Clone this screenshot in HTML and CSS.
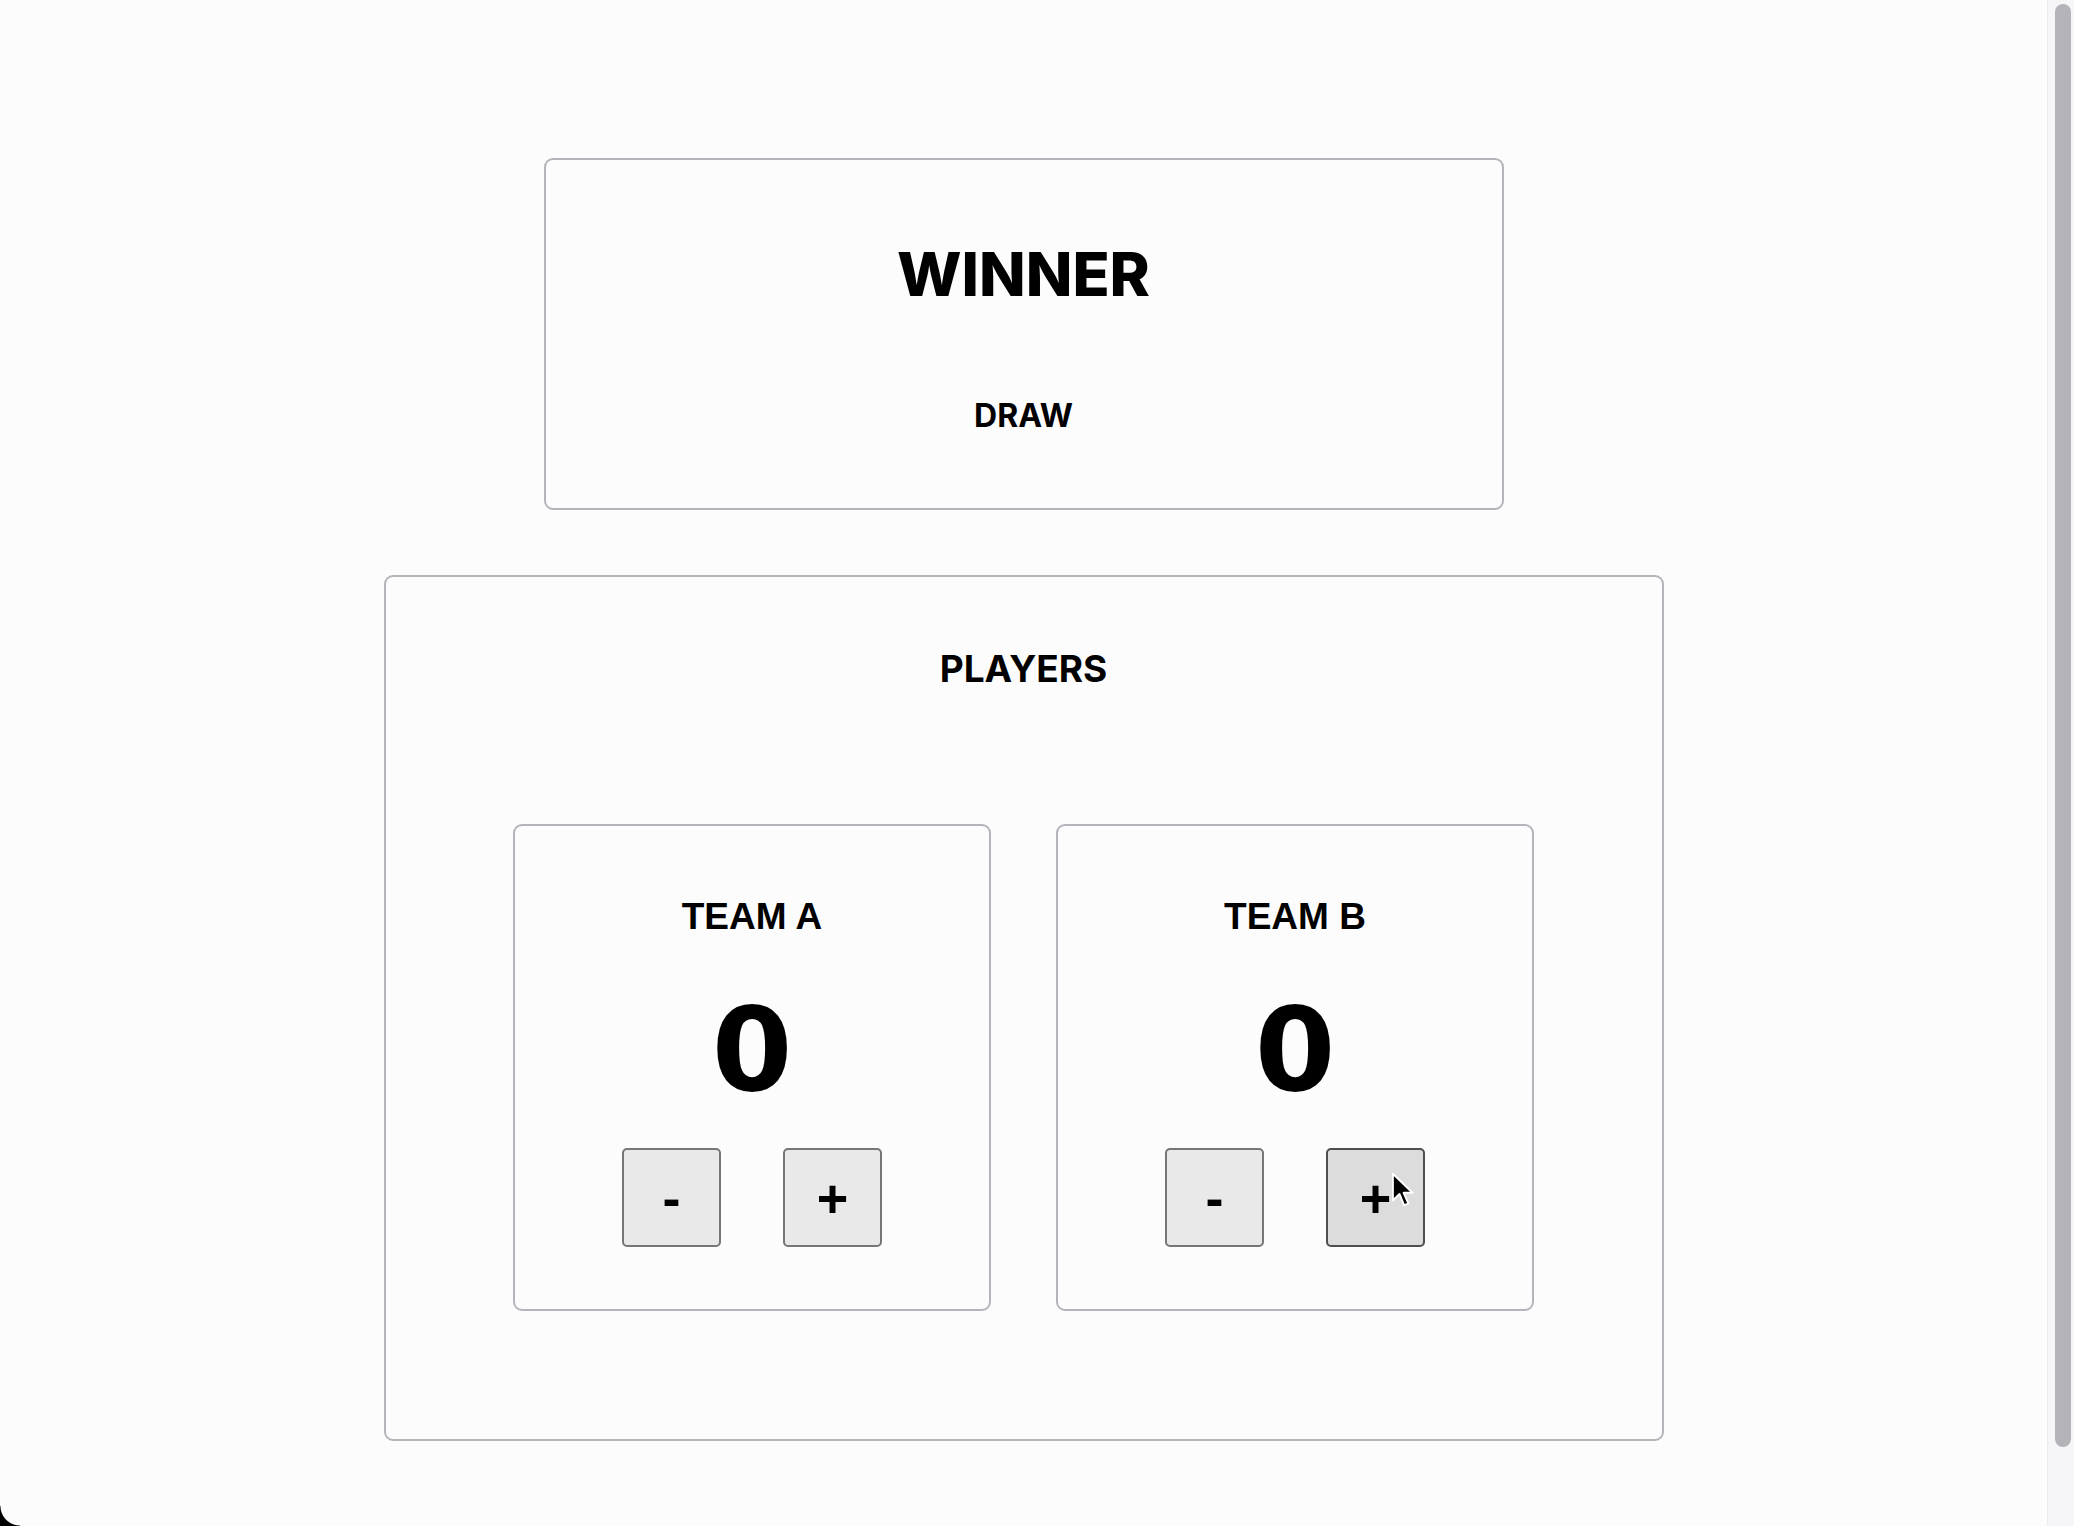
FILE: index.html
```html
<!DOCTYPE html>
<html lang="en">
<head>
<meta charset="utf-8">
<title>Scoreboard</title>
<link rel="stylesheet" href="styles.css">
</head>
<body>
<main class="page">
  <section class="winner-box">
    <h1 class="winner-title">WINNER</h1>
    <h2 class="winner-result">DRAW</h2>
  </section>
  <section class="players-box">
    <h2 class="players-title">PLAYERS</h2>
    <div class="teams">
      <div class="team-card">
        <h3 class="team-name">TEAM A</h3>
        <div class="team-score">0</div>
        <div class="team-buttons">
          <button class="score-btn">-</button>
          <button class="score-btn">+</button>
        </div>
      </div>
      <div class="team-card">
        <h3 class="team-name">TEAM B</h3>
        <div class="team-score">0</div>
        <div class="team-buttons">
          <button class="score-btn">-</button>
          <button class="score-btn score-btn-hover">+
            <svg class="cursor" width="24" height="38" viewBox="0 0 20 32"><path d="M1.5 1.5 L1.5 24 L7 18.5 L11 28 L14.5 26.5 L10.5 17.5 L18 17.5 Z" fill="#000" stroke="#fff" stroke-width="1.6" stroke-linejoin="round"/></svg>
          </button>
        </div>
      </div>
    </div>
  </section>
</main>
<div class="scrollbar"><div class="scrollbar-thumb"></div></div>
<div class="window-corner"></div>
</body>
</html>
```
FILE: styles.css
```css
html {
  background: #fcfcfd;
  scrollbar-width: none;
}
html::-webkit-scrollbar {
  display: none;
}
body {
  margin: 0 27px 0 0;
  background: #fcfcfd;
  color: #000;
  font-family: "Liberation Sans", Arial, sans-serif;
}
.page {
  display: flex;
  flex-direction: column;
  align-items: center;
  padding-top: 158px;
  padding-bottom: 175px;
}
.winner-box {
  box-sizing: border-box;
  width: 960px;
  border: 2px solid #b4b4bb;
  border-radius: 9px;
  display: flex;
  flex-direction: column;
  align-items: center;
  padding: 82px 0 76px;
}
.winner-title {
  margin: 0;
  font-family: Inter, "Liberation Sans", sans-serif;
  font-weight: 800;
  font-size: 61px;
  line-height: 64px;
}
.winner-result {
  margin: 94px 0 0;
  font-family: Inter, "Liberation Sans", sans-serif;
  font-weight: 700;
  font-size: 32px;
  line-height: 32px;
}
.players-box {
  box-sizing: border-box;
  width: 1280px;
  margin-top: 65px;
  border: 2px solid #b4b4bb;
  border-radius: 9px;
  display: flex;
  flex-direction: column;
  align-items: center;
  padding: 75px 0 128px;
}
.players-title {
  margin: 0;
  font-family: Inter, "Liberation Sans", sans-serif;
  font-weight: 700;
  font-size: 37px;
  line-height: 34px;
}
.teams {
  display: flex;
  gap: 65px;
  margin-top: 138px;
}
.team-card {
  box-sizing: border-box;
  width: 478px;
  height: 487px;
  border: 2px solid #b4b4bb;
  border-radius: 9px;
  display: flex;
  flex-direction: column;
  align-items: center;
  padding-top: 73px;
}
.team-name {
  margin: 0;
  font-family: "Liberation Sans", Arial, sans-serif;
  font-weight: 700;
  font-size: 37px;
  line-height: 36px;
}
.team-score {
  margin-top: 55px;
  font-family: "DejaVu Sans", "Liberation Sans", sans-serif;
  font-weight: 700;
  font-size: 116px;
  line-height: 120px;
}
.team-buttons {
  display: flex;
  gap: 62px;
  margin-top: 38px;
}
.score-btn {
  position: relative;
  box-sizing: border-box;
  width: 99px;
  height: 99px;
  padding: 0;
  border: 2px solid #767676;
  border-radius: 5px;
  background: #e9e9e9;
  color: #000;
  font-family: "Liberation Sans", Arial, sans-serif;
  font-weight: 700;
  font-size: 54px;
  line-height: 1;
}
.score-btn-hover {
  background: #dcdcdc;
  border-color: #4f4f4f;
}
.cursor {
  position: absolute;
  left: 63px;
  top: 22px;
}
.scrollbar {
  position: fixed;
  top: 0;
  right: 0;
  width: 27px;
  height: 100%;
  background: #f6f6f8;
  border-left: 1px solid #ececf0;
  box-sizing: border-box;
}
.scrollbar-thumb {
  position: absolute;
  top: 4px;
  left: 7px;
  width: 16px;
  height: 1443px;
  border-radius: 8px;
  background: #b3b3b9;
}
.window-corner {
  position: fixed;
  left: 0;
  bottom: 0;
  width: 20px;
  height: 20px;
  background: radial-gradient(circle at 20px 0, transparent 19px, #000 20px);
}
```
